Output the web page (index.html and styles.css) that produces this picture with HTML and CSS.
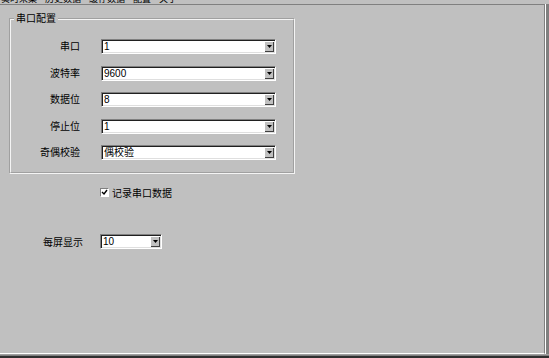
FILE: index.html
```html
<!doctype html>
<html>
    <head>
        <meta charset="utf-8" />
        <title>串口配置</title>
        <link rel="stylesheet" href="styles.css">
    </head>
    <body>
        <div class="window">
            <div class="menubar">
                <span>实时采集</span>
                <span>历史数据</span>
                <span>缓存数据</span>
                <span>配置</span>
                <span>关于</span>
            </div>
            <div class="client">
                <div class="page">
                    <fieldset class="group">
                        <legend>串口配置</legend>
                        <div class="form">
                            <label>串口</label>
                            <div class="combo">
                                <span class="combo-value">1</span>
                                <span class="combo-btn"><svg width="5" height="3" viewBox="0 0 5 3"><polygon points="0,0 5,0 2.5,3" /></svg></span>
                            </div>
                            <label>波特率</label>
                            <div class="combo">
                                <span class="combo-value">9600</span>
                                <span class="combo-btn"><svg width="5" height="3" viewBox="0 0 5 3"><polygon points="0,0 5,0 2.5,3" /></svg></span>
                            </div>
                            <label>数据位</label>
                            <div class="combo">
                                <span class="combo-value">8</span>
                                <span class="combo-btn"><svg width="5" height="3" viewBox="0 0 5 3"><polygon points="0,0 5,0 2.5,3" /></svg></span>
                            </div>
                            <label>停止位</label>
                            <div class="combo">
                                <span class="combo-value">1</span>
                                <span class="combo-btn"><svg width="5" height="3" viewBox="0 0 5 3"><polygon points="0,0 5,0 2.5,3" /></svg></span>
                            </div>
                            <label>奇偶校验</label>
                            <div class="combo">
                                <span class="combo-value">偶校验</span>
                                <span class="combo-btn"><svg width="5" height="3" viewBox="0 0 5 3"><polygon points="0,0 5,0 2.5,3" /></svg></span>
                            </div>
                        </div>
                    </fieldset>
                    <div class="check-row">
                        <span class="check"><svg width="7" height="7" viewBox="0 0 7 7"><path d="M1 3 L3 5 L6 1" /></svg></span>
                        <span>记录串口数据</span>
                    </div>
                    <div class="screen-row">
                        <label>每屏显示</label>
                        <div class="combo combo-small">
                            <span class="combo-value">10</span>
                            <span class="combo-btn"><svg width="5" height="3" viewBox="0 0 5 3"><polygon points="0,0 5,0 2.5,3" /></svg></span>
                        </div>
                    </div>
                </div>
                <div class="rim"></div>
            </div>
            <div class="footer"></div>
        </div>
    </body>
</html>
```
FILE: styles.css
```css
body {
    background-color: #c0c0c0;
    margin: 0;
    overflow: hidden;

    font-family: "Liberation Sans", "Noto Sans CJK SC", sans-serif;
    font-size: 10px;
    color: #000;
}

.window {
    display: flex;
    flex-direction: column;
    height: 358px;
}

.menubar {
    height: 4px;
    overflow: hidden;
    display: flex;
    gap: 8px;
    padding-left: 1px;
    font-size: 9px;
}

.menubar span {
    line-height: 9px;
    margin-top: -5px;
}

.client {
    flex-grow: 1;
    display: flex;
}

.page {
    flex-grow: 1;
    border-top: 1px solid #808080;
    border-right: 1px solid #808080;
    border-bottom: 1px solid #fff;
}

.rim {
    width: 3px;
    border-left: 1px solid #fff;
    background-color: #808080;
}

.footer {
    height: 4px;
    box-sizing: border-box;
    border-top: 1px solid #a0a0a0;
    border-bottom: 2px solid #303030;
    background-color: #808080;
}

.group {
    margin: 9px 0 0 9px;
    padding: 15px 0 12px 0;
    width: 286px;
    box-sizing: border-box;
    border: 2px groove #f4f4f4;
}

.group legend {
    margin-left: 3px;
    padding: 0 2px;
    line-height: 10px;
}

.form {
    display: grid;
    grid-template-columns: 69px 175px;
    grid-auto-rows: 15px;
    column-gap: 21px;
    row-gap: 11.5px;
}

.form label {
    text-align: right;
    line-height: 15px;
}

.combo {
    display: flex;
    height: 15px;
    box-sizing: border-box;
    padding: 1px;
    border: 1px solid;
    border-color: #808080 #fff #fff #808080;
    box-shadow: inset 1px 1px 0 #202020, inset -1px -1px 0 #dfdfdf;
    background-color: #fff;
}

.combo-value {
    flex-grow: 1;
    padding-left: 1px;
    line-height: 11px;
}

.combo-btn {
    width: 10px;
    display: flex;
    align-items: center;
    justify-content: center;
    background-color: #c0c0c0;
    box-shadow: inset 1px 1px 0 #fff, inset -1px -1px 0 #404040;
}

.combo-btn polygon {
    fill: #000;
}

.check-row {
    display: flex;
    align-items: center;
    gap: 3px;
    height: 15px;
    margin: 11px 0 0 100px;
}

.check {
    width: 9px;
    height: 9px;
    box-sizing: border-box;
    display: flex;
    align-items: center;
    justify-content: center;
    border: 1px solid;
    border-color: #808080 #fff #fff #808080;
    background-color: #fff;
}

.check path {
    fill: none;
    stroke: #000;
    stroke-width: 1.4;
}

.screen-row {
    display: flex;
    align-items: center;
    gap: 17px;
    height: 15px;
    margin: 34px 0 0 43px;
}

.combo-small {
    width: 62px;
}
```
